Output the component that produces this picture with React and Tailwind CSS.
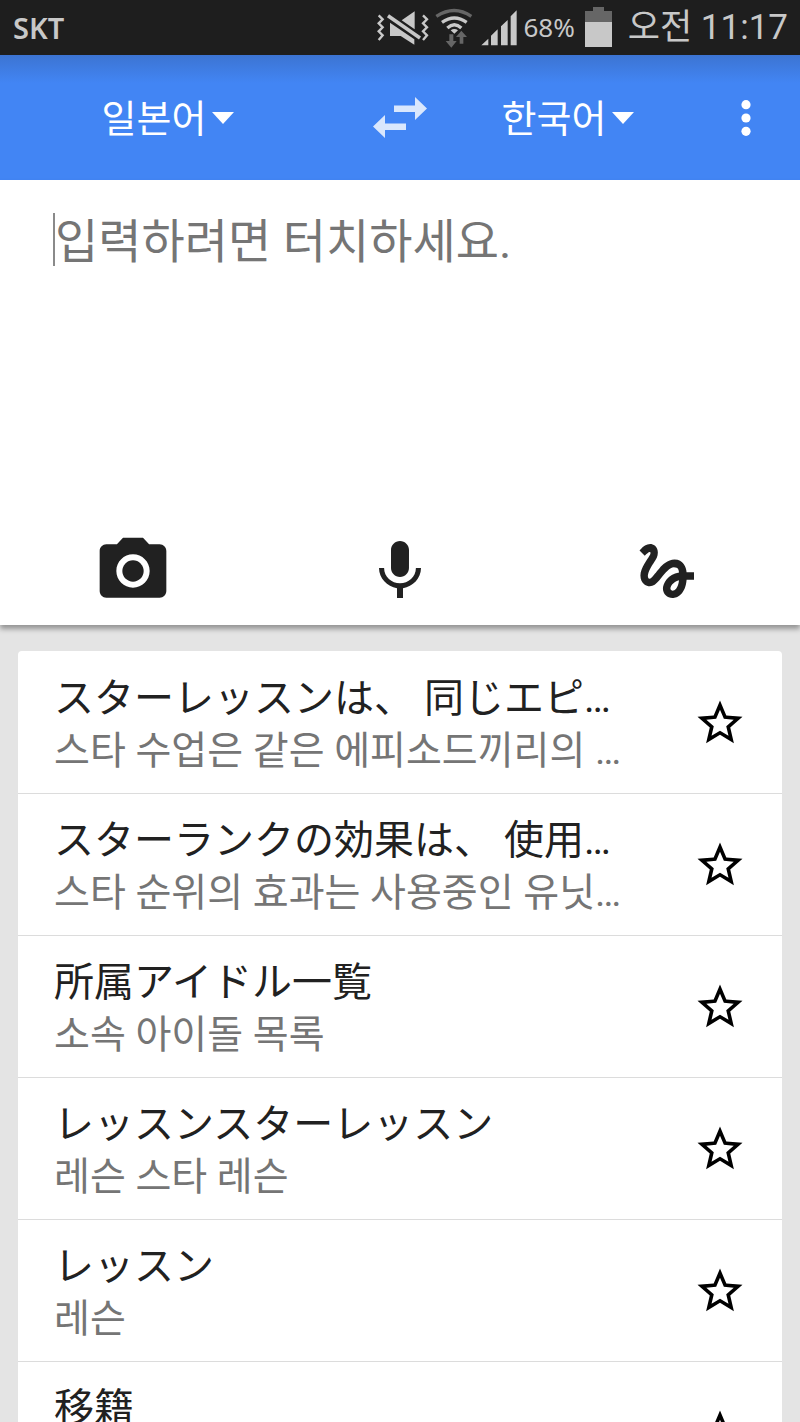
import { useState } from 'react';
import { MdCameraAlt, MdMic, MdGesture, MdStarBorder } from 'react-icons/md';

const history = [
    { id: 1, source: 'スターレッスンは、 同じエピ…', target: '스타 수업은 같은 에피소드끼리의 …' },
    { id: 2, source: 'スターランクの効果は、 使用…', target: '스타 순위의 효과는 사용중인 유닛…' },
    { id: 3, source: '所属アイドル一覧', target: '소속 아이돌 목록' },
    { id: 4, source: 'レッスンスターレッスン', target: '레슨 스타 레슨' },
    { id: 5, source: 'レッスン', target: '레슨' },
    { id: 6, source: '移籍' },
];

const MuteIcon = () => (
    <svg className="w-[52px] h-[36px]" viewBox="27 26 156 108" fill="#c8c8c8">
        <path
            d="M32 42l12 12-12 12 12 12-12 12 12 12-12 14M165 42l12 12-12 12 12 12-12 12 12 12-12 14"
            fill="none"
            stroke="#c8c8c8"
            strokeWidth="7"
        />
        <path d="M60 43L156 110" stroke="#c8c8c8" strokeWidth="11" />
        <path d="M101 57L140 30V84zM66 64V104H98L139 130V114z" />
    </svg>
);

const WifiIcon = () => (
    <svg className="w-[38px] h-[42px]" viewBox="202 16 114 126" fill="none" strokeWidth="10">
        <path d="M206 44Q260 9 311 44" stroke="#666" />
        <path d="M223 62Q260 36 297 62" stroke="#c8c8c8" />
        <path d="M239 79Q260 60 281 79" stroke="#c8c8c8" />
        <path d="M249 86Q260 78 271 86L260 96z" fill="#c8c8c8" />
        <path d="M245 98h12v20h10l-16 20-17-20h11zM276 126v-20h-11l16-19 17 19h-11v20z" fill="#666" />
    </svg>
);

const SignalIcon = () => (
    <svg className="w-[36px] h-[36px]" viewBox="339 26 108 108" fill="#c8c8c8">
        <path d="M340 132L361 112V132zM369 132V103L389 84V132zM399 132V75L419 56V132zM428 132V45L446 27V132z" />
    </svg>
);

const BatteryIcon = () => (
    <svg className="w-[27px] h-[40px]" viewBox="0 0 27 40">
        <path d="M8 0h11v4h8v11H0V4h8z" fill="#666" />
        <path d="M0 15h27v25H0z" fill="#c8c8c8" />
    </svg>
);

const StatusBar = () => (
    <div className="h-[55px] shrink-0 flex items-center justify-between bg-[#1e1e1e] text-[#c8c8c8] pl-[13px] pr-3">
        <span className="font-['Noto_Sans',sans-serif] font-semibold text-[29px] leading-[55px]">SKT</span>
        <div className="flex items-center">
            <MuteIcon />
            <span className="ml-1.5"><WifiIcon /></span>
            <span className="ml-2"><SignalIcon /></span>
            <span className="ml-1.5 font-['Noto_Sans',sans-serif] text-[26px]">68%</span>
            <span className="ml-2.5 pb-0.5"><BatteryIcon /></span>
            <span className="ml-4 text-[35px] leading-[48px]">오전 11:17</span>
        </div>
    </div>
);

const LanguageSelect = ({ label, value, onChange }) => (
    <label className="flex items-center justify-center gap-1.5 text-white">
        <select
            aria-label={label}
            value={value}
            onChange={(e) => onChange(e.target.value)}
            className="appearance-none field-sizing-content bg-transparent pt-0.5 text-[38px] leading-[56px] outline-none"
        >
            <option value="ja">일본어</option>
            <option value="ko">한국어</option>
        </select>
        <svg className="w-[22px] h-3" viewBox="0 0 22 12" fill="currentColor">
            <path d="M0 0h22L11 12z" />
        </svg>
    </label>
);

const Header = () => {
    const [from, setFrom] = useState('ja');
    const [to, setTo] = useState('ko');

    const swap = () => {
        setFrom(to);
        setTo(from);
    };

    return (
        <header className="h-[125px] shrink-0 bg-[#4285f4] bg-[linear-gradient(#3c74d2,#4285f4_28px)]">
            <div className="h-full grid grid-cols-[42%_16%_26%_16%] items-center">
                <LanguageSelect label="Source language" value={from} onChange={setFrom} />
                <button onClick={swap} aria-label="Swap languages" className="flex justify-center">
                    <svg className="w-[54px] h-[41px]" viewBox="0 0 54 41" fill="#d9e7fd">
                        <path d="M21 8.500H42V0L54 11.500 42 23V15H21zM33 26.500H12V18L0 29.500 12 41V33H33z" />
                    </svg>
                </button>
                <LanguageSelect label="Target language" value={to} onChange={setTo} />
                <button aria-label="Menu" className="flex justify-center pl-5">
                    <svg className="w-[10px] h-9" viewBox="0 0 10 36" fill="#fff">
                        <circle cx="5" cy="4.700" r="4.600" />
                        <circle cx="5" cy="18" r="4.600" />
                        <circle cx="5" cy="31.300" r="4.600" />
                    </svg>
                </button>
            </div>
        </header>
    );
};

const InputPanel = () => (
    <section className="relative h-[445px] shrink-0 flex flex-col bg-white shadow-[0_4px_5px_rgba(0,0,0,0.35)]">
        <div className="flex-1 flex items-start px-[53px] pt-[33px]">
            <span className="w-0.5 h-[53px] bg-[#8a8a8a]" />
            <textarea
                aria-label="Text to translate"
                placeholder="입력하려면 터치하세요."
                className="flex-1 h-full resize-none outline-none text-[47px] leading-[58px] text-[#212121] placeholder:text-[#757575]"
            />
        </div>
        <div className="h-[108px] grid grid-cols-3 items-center text-[#212121]">
            <button aria-label="Camera" className="flex justify-center"><MdCameraAlt size={80} /></button>
            <button aria-label="Voice" className="flex justify-center"><MdMic size={72} /></button>
            <button aria-label="Handwriting" className="flex justify-center"><MdGesture size={72} /></button>
        </div>
    </section>
);

const HistoryRow = ({ item }) => (
    <li className="h-[142px] shrink-0 flex items-center pl-9 pr-[35px]">
        <div className="flex-1 min-w-0 h-full pt-5">
            <p lang="ja" className="font-[Roboto,'Noto_Sans_CJK_JP',sans-serif] text-[40px] leading-[53px] text-[#212121] whitespace-nowrap">
                {item.source}
            </p>
            <p className="text-[39px] leading-[53px] text-[#757575] whitespace-nowrap">{item.target}</p>
        </div>
        <button aria-label="Save to phrasebook" className="text-black">
            <MdStarBorder size={54} />
        </button>
    </li>
);

const App = () => {
    return (
        <div lang="ko" className="h-screen flex flex-col overflow-hidden bg-[#e4e4e4] font-[Roboto,'Noto_Sans_CJK_KR',sans-serif]">
            <StatusBar />
            <Header />
            <InputPanel />
            <main className="flex-1 min-h-0 overflow-hidden px-[18px] pt-[26px]">
                <ul className="flex flex-col pt-px bg-white rounded-t-[4px] divide-y divide-[#dcdcdc]">
                    {history.map((item) => (
                        <HistoryRow key={item.id} item={item} />
                    ))}
                </ul>
            </main>
        </div>
    );
};

export default App;
